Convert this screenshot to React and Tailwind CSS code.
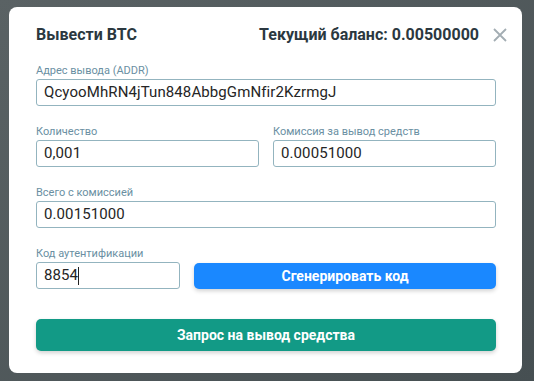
export default function App() {
  const font = { fontFamily: "Roboto, 'Liberation Sans', sans-serif" };
  const Label = ({ children }) => (
    <div className="text-[11px] leading-[16px] text-[#6a8fa2]">{children}</div>
  );
  const Field = ({ children, className = "" }) => (
    <div
      className={
        "h-[27px] rounded-[3px] border border-[#93b4bf] bg-white pl-[7px] flex items-center text-[15px] tracking-[0.1px] text-[#252525] " +
        className
      }
    >
      {children}
    </div>
  );
  return (
    <div
      className="w-[534px] h-[381px] bg-gradient-to-br from-[#5a6264] to-[#464f52] pt-[7px] pl-[9px] overflow-hidden"
      style={font}
    >
      <div className="w-[513px] h-[366px] bg-white rounded-[8px] pt-[17px] pl-[27px] pr-[26px] pb-[22px] flex flex-col">
        <div className="flex items-center h-[22px]">
          <div className="flex-1 text-[16px] font-bold text-[#2b3840]">Вывести BTC</div>
          <div className="text-[16px] font-bold text-[#2b3840]">Текущий баланс: 0.00500000</div>
          <div className="ml-[14px] -mr-[11px] w-[14px] h-[14px] flex items-center justify-center">
            <svg width="14" height="14" viewBox="0 0 14 14">
              <path d="M1 1 L13 13 M13 1 L1 13" stroke="#a3adb3" strokeWidth="1.8" />
            </svg>
          </div>
        </div>

        <div className="mt-[17px]">
          <Label>Адрес вывода (ADDR)</Label>
          <Field>QcyooMhRN4jTun848AbbgGmNfir2KzrmgJ</Field>
        </div>

        <div className="mt-[18px] flex gap-[14px]">
          <div className="flex-1">
            <Label>Количество</Label>
            <Field>0,001</Field>
          </div>
          <div className="flex-1">
            <Label>Комиссия за вывод средств</Label>
            <Field>0.00051000</Field>
          </div>
        </div>

        <div className="mt-[18px]">
          <Label>Всего с комиссией</Label>
          <Field>0.00151000</Field>
        </div>

        <div className="mt-[18px] flex items-end gap-[14px]">
          <div className="w-[144px]">
            <Label>Код аутентификации</Label>
            <Field>
              8854<span className="inline-block w-[1px] h-[18px] bg-[#222]" />
            </Field>
          </div>
          <button className="flex-1 h-[26px] rounded-[5px] bg-[#1a88ff] text-white text-[14px] font-bold shadow-[0_2px_4px_rgba(0,0,0,0.18)]">
            Сгенерировать код
          </button>
        </div>

        <button className="mt-[30px] h-[32px] rounded-[5px] bg-[#129a86] text-white text-[14px] font-bold shadow-[0_2px_4px_rgba(0,0,0,0.18)]">
          Запрос на вывод средства
        </button>
      </div>
    </div>
  );
}
